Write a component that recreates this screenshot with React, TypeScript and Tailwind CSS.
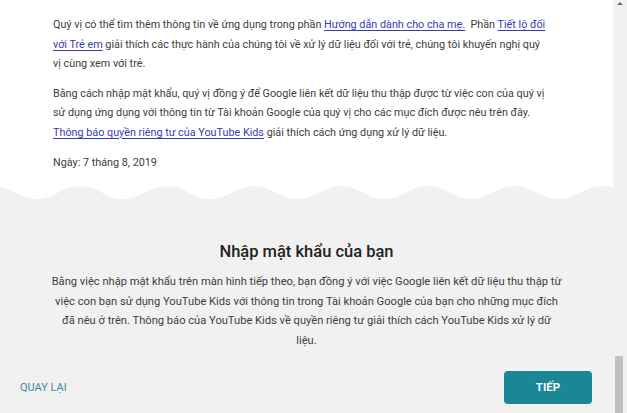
import React from "react";

const GRAY = "#f1f1f1";

function wavePath(width: number, period: number, crestX: number, top: number, bottom: number, height: number) {
  const half = period / 2;
  let x = crestX - period;
  let d = `M ${x} ${top}`;
  let up = true;
  while (x < width + period) {
    const nx = x + half;
    const y0 = up ? top : bottom;
    const y1 = up ? bottom : top;
    d += ` C ${x + half * 0.4} ${y0} ${nx - half * 0.4} ${y1} ${nx} ${y1}`;
    x = nx;
    up = !up;
  }
  d += ` L ${x} ${height} L ${crestX - period} ${height} Z`;
  return d;
}

function Link({ children }: { children: React.ReactNode }) {
  return <a className="text-[#3a3ab5] underline underline-offset-2">{children}</a>;
}

export default function App() {
  const d = wavePath(613, 87, 80, 2, 15, 17);

  return (
    <div
      className="flex h-[413px] w-[627px] overflow-hidden bg-white"
      style={{ fontFamily: "Roboto, 'Noto Sans', sans-serif" }}
    >
      <div className="flex w-[613px] flex-col">
        {/* top text */}
        <div className="mt-[-15px] pl-[53px] text-[10.8px] leading-[19.3px] text-[#3d3d3d] whitespace-nowrap">
          <p className="mb-[11px]">
            Ứng dụng này được thiết kế để sử dụng cùng quý vị, quý vị có thể giám sát.
          </p>
          <p className="mb-[11px]">
            Quý vị có thể tìm thêm thông tin về ứng dụng trong phần <Link>Hướng dẫn dành cho cha mẹ.</Link>
            {"\u00a0 "}Phần <Link>Tiết lộ đối</Link>
            <br />
            <Link>với Trẻ em</Link> giải thích các thực hành của chúng tôi về xử lý dữ liệu đối với trẻ, chúng tôi khuyến nghị quý
            <br />
            vị cùng xem với trẻ.
          </p>
          <p className="mb-[11px]">
            Bằng cách nhập mật khẩu, quý vị đồng ý để Google liên kết dữ liệu thu thập được từ việc con của quý vị
            <br />
            sử dụng ứng dụng với thông tin từ Tài khoản Google của quý vị cho các mục đích được nêu trên đây.
            <br />
            <Link>Thông báo quyền riêng tư của YouTube Kids</Link> giải thích cách ứng dụng xử lý dữ liệu.
          </p>
          <p>Ngày: 7 tháng 8, 2019</p>
        </div>

        {/* wave */}
        <svg className="mt-[12px] block shrink-0" width="613" height="17" viewBox="0 0 613 17">
          <path d={d} fill={GRAY} />
        </svg>

        {/* bottom panel */}
        <div className="flex flex-1 flex-col bg-[#f1f1f1]">
          <h2 className="mt-[39px] text-center text-[16.5px] font-medium leading-[24px] text-[#222]">
            Nhập mật khẩu của bạn
          </h2>
          <p className="mt-[8px] whitespace-nowrap text-center text-[11.15px] leading-[19.5px] text-[#3d3d3d]">
            Bằng việc nhập mật khẩu trên màn hình tiếp theo, bạn đồng ý với việc Google liên kết dữ liệu thu thập từ
            <br />
            việc con bạn sử dụng YouTube Kids với thông tin trong Tài khoản Google của bạn cho những mục đích
            <br />
            đã nêu ở trên. Thông báo của YouTube Kids về quyền riêng tư giải thích cách YouTube Kids xử lý dữ
            <br />
            liệu.
          </p>
          <div className="mt-[21px] flex items-center justify-between pl-[20px] pr-[21px]">
            <button className="text-[11px] font-normal text-[#3b8f9e]">QUAY LẠI</button>
            <button className="h-[33px] w-[88px] rounded-[4px] bg-[#1a8797] text-[11.5px] font-bold text-white">
              TIẾP
            </button>
          </div>
        </div>
      </div>

      {/* scrollbar */}
      <div className="relative flex w-[14px] flex-col bg-[#f1f1f1]">
        <div className="mx-auto mt-[2px] h-0 w-0 border-x-[3px] border-b-[3px] border-x-transparent border-b-[#6a6a6a]" />
        <div className="flex-1" />
        <div className="ml-[2px] h-[57px] w-[8px] bg-[#c1c1c1]" />
      </div>
    </div>
  );
}
